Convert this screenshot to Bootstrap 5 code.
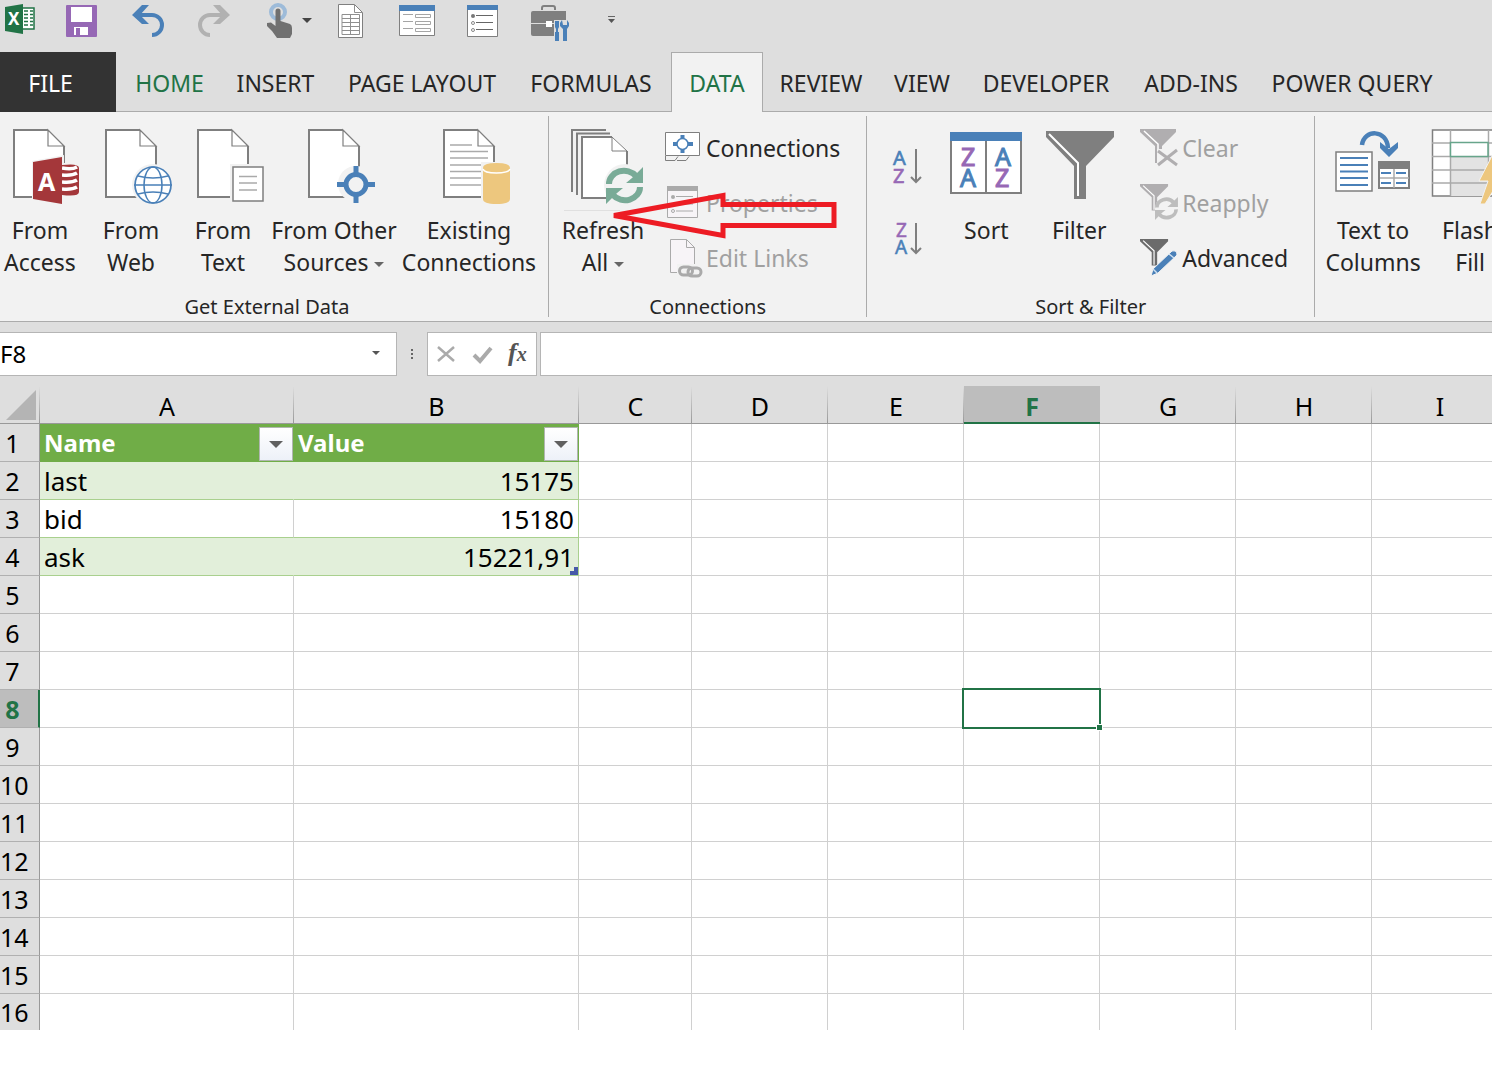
<!DOCTYPE html>
<html lang="en">
<head>
<meta charset="utf-8">
<meta name="viewport" content="width=device-width, initial-scale=1">
<title>Workbook</title>
<link href="https://cdn.jsdelivr.net/npm/bootstrap@5.3.0/dist/css/bootstrap.min.css" rel="stylesheet">
<style>
:root{--chrome:#dedede;--ribbon:#f2f2f2;--line:#ababab;--green:#217346;--blue:#4a80b8;--grey:#7f7f7f}
body{font-family:"Noto Sans","Open Sans",sans-serif;color:#262626;background:#fff;overflow-x:hidden}
button{background:none;border:0;padding:0;color:inherit;white-space:nowrap}
svg{display:block;flex:none;overflow:visible}
.quick-bar{height:52px;background:var(--chrome)}
.tab-strip{height:60px;background:var(--chrome);font-size:23px;line-height:58px;display:grid;box-shadow:inset 0 -1px var(--line);
 grid-template-columns:116px 107px 105px 188px 150px 5px 92px 116px 86px 162px 128px 194px}
.tab-strip a{color:#262626;text-decoration:none;text-align:center;white-space:nowrap;padding-top:2px}
.tab-strip a.tab-file{background:#333;color:#fff;padding-right:15px}
.tab-strip a.tab-home{color:var(--green)}
.tab-strip a.tab-open{background:var(--ribbon);color:var(--green);border:1px solid var(--line);border-bottom:0;padding-top:1px}
.ribbon{background:var(--ribbon);border-bottom:1px solid var(--line);padding:4px 0;font-size:23px;line-height:32px}
.ribbon-group{height:201px;flex:none;border-right:1px solid var(--line)}
.ribbon-group:first-child{padding-right:14px}
.ribbon-group:last-child{flex:1 0 0;border:0;min-width:178px}
.group-body{height:179px}
.group-name{font-size:20px;line-height:24px;text-align:center}
.big-btn{display:flex;flex-direction:column;align-items:center;padding-top:9px;flex:none;height:164px}
.big-btn svg{margin-bottom:9px}
.small-btn{display:flex;align-items:center;height:55px;gap:4px;line-height:30px}
.small-btn:disabled{color:#a0a0a0}
.tri{display:inline-block;border:5px solid transparent;border-top-color:#666;border-bottom:0;vertical-align:middle}
.w80{width:80px}.w102{width:102px}.w82{width:82px}.w140{width:140px}.w130{width:130px}.w108{width:108px}.w104{width:104px}.w116{width:116px}.w78{width:78px}
.sort-col{padding:22px 0 0 13px;gap:16px}
.list-col{padding:4px 26px 0 3px}
.list-col.filter-list{padding:4px 26px 0 16px}
.arrow-note{position:absolute;left:605px;top:74px;pointer-events:none}
.formula-row{background:var(--chrome);padding:10px 0}
.boxed{height:44px;background:#fff;border:1px solid #b5b5b5}
.name-box{width:397px;border-left:0}
.boxed input{border:0;outline:0;background:none;font-size:24px;color:#000;padding:0;min-width:0}
.formula-input{min-width:0;margin-left:3px}
.sheet{overflow:hidden}
.sheet table{table-layout:fixed;width:1508px;border-collapse:separate;border-spacing:0;font-size:26px;line-height:36px;color:#000}
.sheet td,.sheet th{padding:1px 4px 0;height:38px;border-right:1px solid #d0d0d0;border-bottom:1px solid #d0d0d0;white-space:nowrap;position:relative}
.sheet thead th{background:linear-gradient(var(--chrome),#999) right/1px 100% no-repeat var(--chrome);border-right:0;border-bottom-color:#999;font-weight:400;text-align:center;padding-top:3px;line-height:34px;font-size:25px}
.sheet tbody th[scope=row]{background:var(--chrome);border-right-color:#999;border-bottom-color:#b0b0b0;font-weight:400;text-align:center;padding:1px 14px 0 0;font-size:25px}
.sheet thead th.col-on{background:#bdbdbd;color:var(--green);font-weight:700;border-bottom:2px solid var(--green);padding-top:4px;line-height:32px}
.sheet tbody tr.row-on th{background:#bdbdbd;color:var(--green);font-weight:700;border-right:2px solid var(--green);padding-right:13px}
.sheet tr.tbl-head .tc{background:#70ad47;color:#fff;font-weight:700;font-size:24px;text-align:left;border-color:#70ad47}
.sheet .tc{border-bottom-color:#a9d08e}
.sheet .tc.last{border-right-color:#a9d08e;text-align:right}
.sheet tr.band .tc{background:#e2efda}
.sheet tr.band .tc:not(.last){border-right-color:#e2efda}
.sheet .drop{width:34px;height:34px;background:linear-gradient(#fff,#edf1f8);border:1px solid #b0b6b0;display:flex;align-items:center;justify-content:center;position:absolute;right:0;bottom:0}
.sheet .drop i{border:7px solid transparent;border-top-color:#606060;border-bottom:0}
.tbl-end::after{content:"";position:absolute;right:0;bottom:0;width:8px;height:8px;background:#4659a9;clip-path:polygon(50% 0,100% 0,100% 100%,0 100%,0 50%,50% 50%)}
.picked::before{content:"";position:absolute;inset:-2px;border:2px solid var(--green);z-index:1}
.picked::after{content:"";position:absolute;right:-4px;bottom:-4px;width:7px;height:7px;background:var(--green);border:1px solid #fff;z-index:2}
.corner svg{position:absolute;right:4px;bottom:3px}
.sheet tbody tr:last-child>*{height:36px;line-height:35px;border-bottom:0}
</style>
</head>
<body>
<svg width="0" height="0" class="position-absolute" aria-hidden="true">
<defs>
<g id="doc"><path d="M1 1H35L51 17V68H1Z" fill="#fff"/><path d="M35 1H1V68H51V17" fill="none" stroke="#7f7f7f" stroke-width="2"/><path d="M35 1V17H51Z" fill="#fff" stroke="#7f7f7f" stroke-width="1.2"/></g>
<g id="funnel"><path d="M0 0H36V3L22 17V34H15V17L0 3Z"/><path d="M4 2L18 15V33" fill="none" stroke="#fff" stroke-width="1.5"/></g>
<g id="cycle"><path d="M3 17A15 13 0 0 1 30 9M34 20A15 13 0 0 1 7 28" fill="none" stroke="currentColor" stroke-width="6"/><path d="M37 0V16H20L26 11ZM0 37V21H17L11 26Z" fill="currentColor"/></g>
</defs>
</svg>

<div class="quick-bar d-flex align-items-start" role="toolbar" aria-label="Quick access">
<button aria-label="Excel"><svg width="50" height="44" viewBox="0 0 50 44"><rect x="22" y="8" width="12" height="21" fill="#fff" stroke="#217346" stroke-width="1.5"/><path d="M24 11h4m2 0h3M24 14.500h4m2 0h3M24 18h4m2 0h3M24 21.500h4m2 0h3M24 25h4m2 0h3" stroke="#217346" stroke-width="1.700"/><path d="M5 7L23 4V34L5 31Z" fill="#217346"/><text x="8" y="25" font-size="17" font-weight="700" fill="#fff">X</text></svg></button>
<button aria-label="Save"><svg width="65" height="44" viewBox="50 0 65 44"><rect x="66" y="5" width="31" height="32" rx="1" fill="#9668b5"/><path d="M71 7H92V22H71Z" fill="#fff"/><path d="M74 27H88V35H74Z" fill="#fff"/><path d="M76 28h4v7h-4Z" fill="#9668b5"/></svg></button>
<button aria-label="Undo"><svg width="65" height="44" viewBox="115 0 65 44"><path d="M137 15H152A9.500 9.500 0 0 1 152 35" fill="none" stroke="#4a80b8" stroke-width="4"/><path d="M132 15L142 5H149L140 15L149 24H142Z" fill="#4a80b8"/></svg></button>
<button aria-label="Redo"><svg width="68" height="44" viewBox="180 0 68 44"><path d="M225 15H210A9.500 9.500 0 0 0 210 35" fill="none" stroke="#b1b1b1" stroke-width="4"/><path d="M230 15L220 5H213L222 15L213 24H220Z" fill="#b1b1b1"/></svg></button>
<button aria-label="Touch mode"><svg width="76" height="44" viewBox="248 0 76 44"><circle cx="278" cy="12" r="7" fill="none" stroke="#9dbbd9" stroke-width="4"/><path d="M275.500 11a2.500 2.500 0 0 1 5 0V21L290 24Q292 25 292 28V34L290 38H277L272 31L267 26V23L271 22.500L275.500 26Z" fill="#707070"/><path d="M302 18h10l-5 5Z" fill="#444"/></svg></button>
<button aria-label="New sheet"><svg width="56" height="44" viewBox="324 0 56 44"><path d="M338.500 4.500H354.500L362.500 12.500V37.500H338.500Z" fill="#fff" stroke="#7f7f7f"/><path d="M354.500 4.500V12.500H362.500M342 14.500H359.500V34.500H342ZM342 18.500H359.500M342 22.500H359.500M342 26.500H359.500M342 30.500H359.500M350.500 14V34" fill="none" stroke="#8f8f8f"/></svg></button>
<button aria-label="Form"><svg width="70" height="44" viewBox="380 0 70 44"><path d="M399.500 6H434.500V35.500H399.500Z" fill="#fff" stroke="#7f7f7f"/><path d="M399 5H435V11H399Z" fill="#4a80b8"/><path d="M403 14.500h10M403 21.500h10M403 28.500h10M415.500 14.500h15v3h-15ZM415.500 21.500h15v3h-15ZM415.500 28.500h15v3h-15Z" fill="none" stroke="#a5a5a5"/></svg></button>
<button aria-label="Properties list"><svg width="65" height="44" viewBox="450 0 65 44"><path d="M467.500 6H497.500V36.500H467.500Z" fill="#fff" stroke="#7f7f7f"/><path d="M467 5H498V10H467Z" fill="#4a80b8"/><path d="M476 15.500h17M476 22.500h17M476 29.500h17" stroke="#666"/><circle cx="473" cy="16" r="2" fill="#777"/><circle cx="473" cy="23" r="1.500" fill="none" stroke="#888"/><circle cx="473" cy="30" r="1.500" fill="none" stroke="#888"/></svg></button>
<button aria-label="Tools"><svg width="75" height="44" viewBox="515 0 75 44"><path d="M542 10V8Q542 6 544 6H553Q555 6 555 8V10" fill="none" stroke="#7f7f7f" stroke-width="2"/><rect x="531" y="11" width="35" height="25" rx="2" fill="#7f7f7f"/><path d="M531 23.500H566" stroke="#dedede"/><path d="M554 20h15v19h-15Z" fill="#dedede"/><path d="M553 11H566V20H553Z" fill="#7f7f7f"/><rect x="546" y="21" width="6" height="6" fill="#fff"/><path d="M555 21h4v6l-1 2v3h1v9h-4v-9h1v-3l-1-2Z" fill="#4a80b8"/><path d="M562 20L560 23V26L563 29V41H567V29L569 26V23L567 20V25H563Z" fill="#4a80b8"/></svg></button>
<button aria-label="Customize"><svg width="44" height="44" viewBox="590 0 44 44"><path d="M608 16.500h7" stroke="#666"/><path d="M608 19h7l-3.500 4Z" fill="#555"/></svg></button>
</div>

<nav class="tab-strip" aria-label="Ribbon tabs">
<a href="#" class="tab-file">FILE</a><a href="#" class="tab-home">HOME</a><a href="#">INSERT</a><a href="#">PAGE LAYOUT</a><a href="#">FORMULAS</a><span></span><a href="#" class="tab-open">DATA</a><a href="#">REVIEW</a><a href="#">VIEW</a><a href="#">DEVELOPER</a><a href="#">ADD-INS</a><a href="#">POWER QUERY</a>
</nav>

<div class="ribbon d-flex position-relative overflow-hidden">
<section class="ribbon-group">
<div class="group-body d-flex">
<button class="big-btn w80"><svg width="80" height="80" viewBox="0 125 80 80"><use href="#doc" x="13" y="129"/><path d="M32 161L64 155V205L32 201Z" fill="#f2f2f2"/><path d="M60 163H81V205H60Z" fill="#f2f2f2"/><path d="M62 165Q79 163 79 168V192Q79 197 62 195Z" fill="#a4373a"/><path d="M62 168Q72 170 77 167M62 175Q72 176 77 173M62 182Q72 183 77 180M62 189Q72 190 77 187" fill="none" stroke="#fff" stroke-width="3.500"/><path d="M33 162L62 157V204L33 199Z" fill="#a4373a"/><text x="38" y="191" font-size="25" font-weight="700" fill="#fff">A</text></svg><span>From</span><span>Access</span></button>
<button class="big-btn w102"><svg width="80" height="80" viewBox="91 125 80 80"><use href="#doc" x="105" y="129"/><circle cx="153" cy="185" r="21" fill="#f2f2f2"/><circle cx="153" cy="185" r="18" fill="#fff" stroke="#4a80b8" stroke-width="1.700"/><g fill="none" stroke="#4a80b8" stroke-width="1.500"><ellipse cx="153" cy="185" rx="9" ry="18"/><path d="M134 185H172M138 176Q153 180 168 176M138 194Q153 190 168 194"/></g></svg><span>From</span><span>Web</span></button>
<button class="big-btn w82"><svg width="80" height="80" viewBox="183 125 80 80"><use href="#doc" x="197" y="129"/><path d="M230 164H266V204H230Z" fill="#f2f2f2"/><path d="M233 167H263V201H233Z" fill="#fff" stroke="#7f7f7f" stroke-width="1.500"/><path d="M239 176.500H257M239 183H257M239 190H257" stroke="#aaa" stroke-width="1.500"/></svg><span>From</span><span>Text</span></button>
<button class="big-btn w140"><svg width="80" height="80" viewBox="294 125 80 80"><use href="#doc" x="308" y="129"/><circle cx="356" cy="184" r="18" fill="#f2f2f2"/><path d="M356 166V203M337 184.500H375" stroke="#4a80b8" stroke-width="5"/><circle cx="356" cy="184.500" r="10" fill="#f2f2f2" stroke="#4a80b8" stroke-width="5"/></svg><span>From Other</span><span>Sources <i class="tri"></i></span></button>
<button class="big-btn w130"><svg width="80" height="80" viewBox="429 125 80 80"><use href="#doc" x="443" y="129"/><path d="M450 145H472M450 151.500H488M450 158H488M450 165H488M450 171.500H488M450 178H488M450 185H488" stroke="#aaa" stroke-width="1.700"/><path d="M481 162H512V205H481Z" fill="#f2f2f2"/><path d="M483 168Q483 163 496.500 163T510 168V199Q510 204 496.500 204T483 199Z" fill="#edc77e"/><path d="M483 169Q484 173 496.500 173T510 169" fill="none" stroke="#fff" stroke-width="1.500"/></svg><span>Existing</span><span>Connections</span></button>
</div>
<div class="group-name">Get External Data</div>
</section>
<section class="ribbon-group">
<div class="group-body d-flex">
<button class="big-btn w108"><svg width="80" height="80" viewBox="563 125 80 80"><path d="M572 192V130H606M577 195V133.500H610" fill="none" stroke="#7f7f7f" stroke-width="2"/><path d="M582 137H613L627 151V198H582Z" fill="#fff"/><path d="M612 137H582V198H627V151" fill="none" stroke="#7f7f7f" stroke-width="2"/><path d="M612 137V151H627Z" fill="#fff" stroke="#7f7f7f"/><circle cx="625" cy="185" r="21" fill="#f2f2f2"/><use href="#cycle" x="606" y="167" color="#79ab97"/><path d="M564 210.500H620" stroke="#e0e0e0"/></svg><span>Refresh</span><span>All <i class="tri"></i></span></button>
<div class="list-col d-flex flex-column align-items-start">
<button class="small-btn"><svg width="42" height="41" viewBox="660 127 42 41"><path d="M665.500 132.500H699.500V155.500H665.500Z" fill="#fff" stroke="#7f7f7f"/><path d="M665.500 156V160.500H675L678 156.500M677 160.500H686L689 156.500" fill="none" stroke="#7f7f7f"/><path d="M682.500 135V153M673 144H693" stroke="#4a80b8" stroke-width="4"/><circle cx="682.500" cy="144" r="5.500" fill="#fff" stroke="#4a80b8" stroke-width="1.500"/></svg>Connections</button>
<button class="small-btn" disabled><svg width="42" height="41" viewBox="660 182 42 41"><path d="M667.500 187.500H697.500V217.500H667.500Z" fill="#f7f4f7" stroke="#aaa"/><path d="M667 186H698V191H667Z" fill="#aaa"/><path d="M676 196.500H693M676 204H693M676 211H693" stroke="#aaa"/><circle cx="673" cy="197" r="2" fill="#aaa"/><circle cx="673" cy="211" r="1.500" fill="none" stroke="#aaa"/></svg>Properties</button>
<button class="small-btn" disabled><svg width="42" height="41" viewBox="660 237 42 41"><path d="M670.500 239.500H686.500L694.500 247.500V272.500H670.500Z" fill="#f7f4f7" stroke="#aaa"/><path d="M686.500 239.500V247.500H694.500" fill="none" stroke="#aaa"/><path d="M677 264H704V279H677Z" fill="#f2f2f2"/><g fill="none" stroke="#aaa" stroke-width="3"><rect x="679.500" y="267" width="13" height="8" rx="4"/><rect x="688" y="268" width="13" height="8" rx="4"/></g></svg>Edit Links</button>
</div>
</div>
<div class="group-name">Connections</div>
</section>
<section class="ribbon-group">
<div class="group-body d-flex">
<div class="sort-col d-flex flex-column">
<button aria-label="Sort A to Z"><svg width="54" height="56" viewBox="880 138 54 56" font-size="20"><text x="893" y="165" fill="#4a80b8" stroke="#4a80b8" stroke-width=".6">A</text><text x="893" y="183" fill="#9668b5" stroke="#9668b5" stroke-width=".6">Z</text><path d="M916 149V182M911 177L916 182L921 177" fill="none" stroke="#7f7f7f" stroke-width="2"/></svg></button>
<button aria-label="Sort Z to A"><svg width="54" height="56" viewBox="880 210 54 56" font-size="19"><text x="896" y="237" fill="#9668b5" stroke="#9668b5" stroke-width=".5">Z</text><text x="895" y="254" fill="#4a80b8" stroke="#4a80b8" stroke-width=".5">A</text><path d="M916 223V253M911 248L916 253L921 248" fill="none" stroke="#7f7f7f" stroke-width="2"/></svg></button>
</div>
<button class="big-btn w104"><svg width="80" height="80" viewBox="946 125 80 80" font-size="25"><path d="M951 134H1021V193H951Z" fill="#fff" stroke="#7f7f7f" stroke-width="2"/><path d="M986 140V193" stroke="#7f7f7f" stroke-width="2"/><path d="M950 132H1022V141H950Z" fill="#4a80b8"/><g fill="#9668b5" stroke="#9668b5"><text x="961" y="166">Z</text><text x="995" y="187">Z</text></g><g fill="#4a80b8" stroke="#4a80b8"><text x="960" y="187">A</text><text x="995" y="166">A</text></g></svg><span>Sort</span></button>
<button class="big-btn w82"><svg width="80" height="80" viewBox="1039 125 80 80"><path d="M1046 131H1114V137L1086 166V199H1074V166L1046 137Z" fill="#7f7f7f"/><path d="M1049 134L1078 163V196" fill="none" stroke="#fff" stroke-width="2"/></svg><span>Filter</span></button>
<div class="list-col filter-list d-flex flex-column align-items-start">
<button class="small-btn" disabled><svg width="42" height="41" viewBox="1136 127 42 41"><use href="#funnel" x="1140" y="129" fill="#b0aeb0"/><path d="M1157 149H1180V168H1157Z" fill="#f2f2f2"/><path d="M1158 151L1177 165M1177 150L1158 165" stroke="#b0aeb0" stroke-width="3"/></svg>Clear</button>
<button class="small-btn" disabled><svg width="42" height="41" viewBox="1136 182 42 41"><use href="#funnel" transform="translate(1140 184) scale(.78)" fill="#b0aeb0"/><circle cx="1167" cy="209" r="12" fill="#f2f2f2"/><use href="#cycle" transform="translate(1155 197) scale(.62)" color="#bdbdbd"/></svg>Reapply</button>
<button class="small-btn"><svg width="42" height="41" viewBox="1136 237 42 41"><use href="#funnel" transform="translate(1140 239) scale(.78)" fill="#6b6b6b"/><path d="M1151 276L1153 269L1172 251Q1177 250 1177 255L1158 273Z" fill="#4a80b8" stroke="#f2f2f2"/><path d="M1169 254L1174 258M1153 269L1157 273" stroke="#cfe0f0" stroke-width="1.500"/></svg>Advanced</button>
</div>
</div>
<div class="group-name">Sort &amp; Filter</div>
</section>
<section class="ribbon-group">
<div class="group-body d-flex">
<button class="big-btn w116"><svg width="80" height="80" viewBox="1332 125 80 80"><path d="M1335 152H1371V191H1335Z" fill="#fff" stroke="#7f7f7f" stroke-width="1.500"/><path d="M1339 158H1367M1339 165H1367M1339 171.500H1367M1339 178H1367M1339 185H1367" stroke="#4a80b8" stroke-width="1.800"/><path d="M1378 162H1408V188H1378Z" fill="#fff" stroke="#7f7f7f" stroke-width="2"/><path d="M1377 161H1409V169H1377Z" fill="#7f7f7f"/><path d="M1393 169V188M1379 178H1408" stroke="#aaa" stroke-width="1.500"/><path d="M1380 173H1390M1395 173H1405M1380 183H1390M1395 183H1405" stroke="#4a80b8" stroke-width="2"/><path d="M1361 145C1363 129 1386 129 1387 148" fill="none" stroke="#4a80b8" stroke-width="4.500"/><path d="M1379 142L1388 149L1397 142V148L1388 157L1379 148Z" fill="#4a80b8"/></svg><span>Text to</span><span>Columns</span></button>
<button class="big-btn w78"><svg width="80" height="80" viewBox="1429 125 80 80"><path d="M1431.500 130H1509V196H1431.500Z" fill="#fff" stroke="#7f7f7f" stroke-width="1.500"/><path d="M1450 157H1488V196H1450Z" fill="#e3e3e3"/><path d="M1431 143H1509M1431 156.500H1509M1431 170H1509M1431 183H1509M1449.500 130V196M1487.500 130V196" stroke="#aaa" stroke-width="1.500"/><path d="M1449.500 142.500H1487V156.500H1449.500Z" fill="#fff" stroke="#67a58b" stroke-width="1.500"/><path d="M1493 152L1478 181H1487L1479 204H1484L1500 178H1492L1505 152Z" fill="#edc77e" stroke="#f2f2f2"/></svg><span>Flash</span><span>Fill</span></button>
</div>
</section>
<svg class="arrow-note" width="240" height="60" viewBox="605 186 240 60"><path d="M614 215.500L723 195.500V204.500H834V225.500H723V235.500Z" fill="none" stroke="#ed1c24" stroke-width="5"/></svg>
</div>

<div class="formula-row d-flex align-items-center">
<div class="boxed name-box d-flex align-items-center flex-shrink-0"><input class="flex-fill" type="text" value="F8" aria-label="Name box"><button class="pe-3" aria-label="Show names"><svg width="8" height="8" viewBox="0 0 8 8"><path d="M0 1h8l-4 4Z" fill="#555"/></svg></button></div>
<svg width="30" height="44" viewBox="397 332 30 44"><path d="M411 349h2v2h-2ZM411 353h2v2h-2ZM411 357h2v2h-2Z" fill="#666"/></svg>
<div class="boxed d-flex align-items-center flex-shrink-0" role="group" aria-label="Entry">
<button aria-label="Cancel"><svg width="36" height="42" viewBox="428 333 36 42"><path d="M438 347L454 361M454 347L438 361" stroke="#aaa" stroke-width="2.500"/></svg></button>
<button aria-label="Enter"><svg width="36" height="42" viewBox="464 333 36 42"><path d="M474 355L480 361L491 348" fill="none" stroke="#aaa" stroke-width="4"/></svg></button>
<button aria-label="Insert function"><svg width="36" height="42" viewBox="500 333 36 42"><text x="508" y="361" font-family="Liberation Serif,serif" font-style="italic" font-weight="700" font-size="26" fill="#555">f<tspan font-size="20">x</tspan></text></svg></button>
</div>
<input class="boxed formula-input flex-fill border-end-0" type="text" aria-label="Formula bar">
</div>

<main class="sheet">
<table>
<colgroup><col style="width:40px"><col style="width:254px"><col style="width:285px"><col style="width:113px"><col style="width:136px"><col style="width:136px"><col style="width:136px"><col style="width:136px"><col style="width:136px"><col style="width:136px"></colgroup>
<thead><tr><th class="corner" aria-label="Select all"><svg width="30" height="30"><path d="M30 0V30H0Z" fill="#b4b4b4"/></svg></th><th scope="col">A</th><th scope="col">B</th><th scope="col">C</th><th scope="col">D</th><th scope="col">E</th><th scope="col" class="col-on">F</th><th scope="col">G</th><th scope="col">H</th><th scope="col">I</th></tr></thead>
<tbody>
<tr class="tbl-head"><th scope="row">1</th><td class="tc">Name<button class="drop" aria-label="Filter Name"><i></i></button></td><td class="tc last">Value<button class="drop" aria-label="Filter Value"><i></i></button></td><td></td><td></td><td></td><td></td><td></td><td></td><td></td></tr>
<tr class="band"><th scope="row">2</th><td class="tc">last</td><td class="tc last">15175</td><td></td><td></td><td></td><td></td><td></td><td></td><td></td></tr>
<tr><th scope="row">3</th><td class="tc">bid</td><td class="tc last">15180</td><td></td><td></td><td></td><td></td><td></td><td></td><td></td></tr>
<tr class="band"><th scope="row">4</th><td class="tc">ask</td><td class="tc last tbl-end">15221,91</td><td></td><td></td><td></td><td></td><td></td><td></td><td></td></tr>
<tr><th scope="row">5</th><td></td><td></td><td></td><td></td><td></td><td></td><td></td><td></td><td></td></tr>
<tr><th scope="row">6</th><td></td><td></td><td></td><td></td><td></td><td></td><td></td><td></td><td></td></tr>
<tr><th scope="row">7</th><td></td><td></td><td></td><td></td><td></td><td></td><td></td><td></td><td></td></tr>
<tr class="row-on"><th scope="row">8</th><td></td><td></td><td></td><td></td><td></td><td class="picked"></td><td></td><td></td><td></td></tr>
<tr><th scope="row">9</th><td></td><td></td><td></td><td></td><td></td><td></td><td></td><td></td><td></td></tr>
<tr><th scope="row">10</th><td></td><td></td><td></td><td></td><td></td><td></td><td></td><td></td><td></td></tr>
<tr><th scope="row">11</th><td></td><td></td><td></td><td></td><td></td><td></td><td></td><td></td><td></td></tr>
<tr><th scope="row">12</th><td></td><td></td><td></td><td></td><td></td><td></td><td></td><td></td><td></td></tr>
<tr><th scope="row">13</th><td></td><td></td><td></td><td></td><td></td><td></td><td></td><td></td><td></td></tr>
<tr><th scope="row">14</th><td></td><td></td><td></td><td></td><td></td><td></td><td></td><td></td><td></td></tr>
<tr><th scope="row">15</th><td></td><td></td><td></td><td></td><td></td><td></td><td></td><td></td><td></td></tr>
<tr><th scope="row">16</th><td></td><td></td><td></td><td></td><td></td><td></td><td></td><td></td><td></td></tr>
</tbody>
</table>
</main>
<script src="https://cdn.jsdelivr.net/npm/bootstrap@5.3.0/dist/js/bootstrap.bundle.min.js"></script>
</body>
</html>
